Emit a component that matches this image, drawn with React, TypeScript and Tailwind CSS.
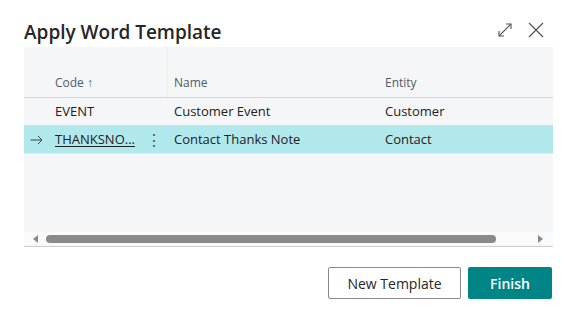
import React from "react";

const rows = [
  { code: "EVENT", name: "Customer Event", entity: "Customer", selected: false },
  { code: "THANKSNO...", name: "Contact Thanks Note", entity: "Contact", selected: true },
];

const ExpandIcon = () => (
  <svg width="16" height="16" viewBox="0 0 16 16" fill="none" stroke="#555" strokeWidth="1.1">
    <path d="M2 14 L14 2" />
    <path d="M9 2 H14 V7" />
    <path d="M2 9 V14 H7" />
  </svg>
);

const CloseIcon = () => (
  <svg width="18" height="18" viewBox="0 0 18 18" fill="none" stroke="#555" strokeWidth="1.3">
    <path d="M2 2 L16 16 M16 2 L2 16" />
  </svg>
);

const RowArrow = () => (
  <svg width="13" height="10" viewBox="0 0 13 10" fill="none" stroke="#444" strokeWidth="1">
    <path d="M0.5 5 H12" />
    <path d="M8 1 L12 5 L8 9" />
  </svg>
);

export default function App() {
  return (
    <div className="w-[567px] h-[313px] bg-white font-['Segoe_UI','Open_Sans',sans-serif] text-[#212121] flex flex-col">
      <div className="h-[47px] flex items-end justify-between pl-6 pr-[22px] pb-[2px]">
        <h1 className="text-[19px] font-semibold leading-[26px] text-[#262626]">Apply Word Template</h1>
        <div className="flex items-center gap-[14px] pb-[6px]">
          <ExpandIcon />
          <CloseIcon />
        </div>
      </div>

      <div className="ml-6 mr-[14px] h-[200px] bg-[#f5f6f8] border-b border-[#cfcfcf] flex flex-col">
        <div className="h-[51px] flex items-end border-b border-[#d6d6d6] text-[12px] text-[#4f5b69]">
          <div className="w-[26px]" />
          <div className="w-[90px] h-full flex items-end pb-[5px] pl-[5px]">Code ↑</div>
          <div className="w-[28px] h-full border-r border-[#ebecee]" />
          <div className="w-[210px] h-full flex items-end pb-[5px] pl-[6px]">Name</div>
          <div className="flex-1 h-full flex items-end pb-[5px] pl-[7px]">Entity</div>
        </div>

        {rows.map((row) => (
          <div
            key={row.code}
            className={`h-[28px] flex items-center text-[13px] border-b ${
              row.selected ? "bg-[#b1e8ec] border-[#e3e5e8]" : "border-[#dcdde0]"
            }`}
          >
            <div className="w-[26px] flex justify-end pr-[7px]">{row.selected ? <RowArrow /> : null}</div>
            <div className={`w-[90px] pl-[5px] ${row.selected ? "underline underline-offset-2" : ""}`}>
              {row.code}
            </div>
            <div className="w-[28px] flex justify-center text-[16px] text-[#555]">{row.selected ? "⋮" : ""}</div>
            <div className="w-[210px] pl-[6px]">{row.name}</div>
            <div className="flex-1 pl-[7px]">{row.entity}</div>
          </div>
        ))}

        <div className="flex-1" />

        <div className="h-[13px] mb-[1px] bg-[#fbfbfb] flex items-center">
          <div className="w-[22px] flex justify-end pr-[8px]">
            <div className="w-0 h-0 border-y-[4px] border-y-transparent border-r-[5px] border-r-[#8a8a8a]" />
          </div>
          <div className="w-[450px] h-[8px] rounded-full bg-[#8a8a8a]" />
          <div className="flex-1 flex justify-end pr-[10px]">
            <div className="w-0 h-0 border-y-[4px] border-y-transparent border-l-[5px] border-l-[#8a8a8a]" />
          </div>
        </div>
      </div>

      <div className="flex justify-end gap-[7px] pr-[15px] pt-[20px]">
        <button className="w-[133px] h-[32px] border border-[#8a8a8a] rounded-[2px] bg-white text-[14px] text-[#262626]">
          New Template
        </button>
        <button className="w-[84px] h-[32px] rounded-[2px] bg-[#008587] text-white text-[14px] font-semibold">
          Finish
        </button>
      </div>
    </div>
  );
}
